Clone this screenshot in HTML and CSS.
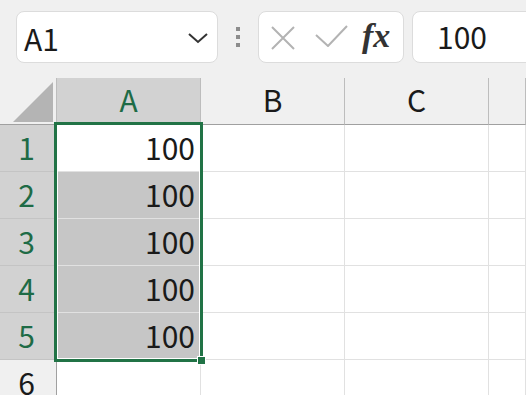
FILE: index.html
```html
<!DOCTYPE html>
<html lang="ja">

<head>
    <meta charset="UTF-8">
    <meta name="viewport" content="width=device-width, initial-scale=1.0">
    <title>Sheet1</title>
    <link rel="stylesheet" href="styles.css">
</head>

<body>
    <!-- Name box + formula bar -->
    <div class="toolbar">
        <div class="name-box">
            <span class="name-text">A1</span>
            <svg class="chevron" width="22" height="14" viewBox="0 0 22 14">
                <polyline points="2,3 11,11 20,3" fill="none" stroke="#333" stroke-width="2" />
            </svg>
        </div>
        <div class="grip">
            <span></span><span></span><span></span>
        </div>
        <div class="fx-box">
            <svg class="icon-x" width="26" height="24" viewBox="0 0 26 24">
                <path d="M2 1 L24 23 M24 1 L2 23" stroke="#b3b3b3" stroke-width="2" fill="none" />
            </svg>
            <svg class="icon-check" width="33" height="23" viewBox="0 0 33 23">
                <polyline points="1,11 13,22 32,2" fill="none" stroke="#b3b3b3" stroke-width="2" />
            </svg>
            <span class="fx">fx</span>
        </div>
        <div class="formula">100</div>
    </div>

    <!-- Grid -->
    <div class="sheet">
        <div class="corner"></div>
        <div class="col-head sel">A</div>
        <div class="col-head">B</div>
        <div class="col-head">C</div>
        <div class="col-head"></div>

        <div class="row-head sel">1</div>
        <div class="cell num">100</div>
        <div class="cell"></div>
        <div class="cell"></div>
        <div class="cell"></div>

        <div class="row-head sel">2</div>
        <div class="cell num hl">100</div>
        <div class="cell"></div>
        <div class="cell"></div>
        <div class="cell"></div>

        <div class="row-head sel">3</div>
        <div class="cell num hl">100</div>
        <div class="cell"></div>
        <div class="cell"></div>
        <div class="cell"></div>

        <div class="row-head sel">4</div>
        <div class="cell num hl">100</div>
        <div class="cell"></div>
        <div class="cell"></div>
        <div class="cell"></div>

        <div class="row-head sel">5</div>
        <div class="cell num hl">100</div>
        <div class="cell"></div>
        <div class="cell"></div>
        <div class="cell"></div>

        <div class="row-head">6</div>
        <div class="cell"></div>
        <div class="cell"></div>
        <div class="cell"></div>
        <div class="cell"></div>

        <!-- selection outline over A1:A5 -->
        <div class="selection">
            <div class="handle"></div>
        </div>
    </div>
</body>

</html>
```

FILE: styles.css
```css
body {
    margin: 0;
    overflow: hidden;
    height: 100vh;
    background: #f0f0f0;
    font-family: "Noto Sans CJK JP", "Noto Sans", sans-serif;
    color: #1a1a1a;
}

.toolbar {
    display: flex;
    align-items: center;
    height: 52px;
    padding: 11px 0 15px 16px;
}

.name-box {
    width: 202px;
    height: 52px;
    box-sizing: border-box;
    background: #fff;
    border: 1px solid #dcdcdc;
    border-radius: 8px;
    display: flex;
    align-items: center;
    justify-content: space-between;
    padding: 0 8px 0 7px;
}

.name-text {
    font-size: 30px;
    line-height: 1;
    margin-top: 1px;
}

.chevron {
    margin-top: 1px;
}

.grip {
    width: 40px;
    display: flex;
    flex-direction: column;
    align-items: center;
    gap: 4px;
}

.grip span {
    width: 4px;
    height: 4px;
    background: #8c8c8c;
}

.fx-box {
    width: 146px;
    height: 52px;
    box-sizing: border-box;
    background: #fff;
    border: 1px solid #dcdcdc;
    border-radius: 8px;
    display: flex;
    align-items: center;
    padding-left: 11px;
}

.icon-x {
    margin-top: 2px;
}

.icon-check {
    margin-left: 19px;
    margin-top: -4px;
}

.fx {
    font-family: "Liberation Serif", serif;
    font-style: italic;
    font-weight: bold;
    font-size: 34px;
    color: #333;
    margin-left: 14px;
    margin-top: -2px;
}

.formula {
    flex: 1;
    height: 52px;
    box-sizing: border-box;
    margin-left: 8px;
    margin-right: -10px;
    background: #fff;
    border: 1px solid #dcdcdc;
    border-radius: 8px;
    font-size: 30px;
    line-height: 48px;
    padding-left: 24px;
}

.sheet {
    position: relative;
    display: grid;
    grid-template-columns: 57px 144px 144px 144px 1fr;
    grid-auto-rows: 47px;
    font-size: 30px;
    line-height: 1;
}

.sheet > div {
    box-sizing: border-box;
}

.corner {
    position: relative;
    border-right: 1px solid #bdbdbd;
    border-bottom: 1px solid #a0a0a0;
}

.corner::after {
    content: "";
    position: absolute;
    right: 3px;
    bottom: 2px;
    width: 40px;
    height: 40px;
    background: #b4b4b4;
    clip-path: polygon(100% 0, 100% 100%, 0 100%);
}

.col-head {
    display: flex;
    align-items: center;
    justify-content: center;
    padding-bottom: 4px;
    border-right: 1px solid #bdbdbd;
    border-bottom: 1px solid #a0a0a0;
}

.row-head {
    display: flex;
    align-items: center;
    justify-content: center;
    padding-right: 3px;
    padding-bottom: 3px;
    border-right: 1px solid #a0a0a0;
    border-bottom: 1px solid #c4c4c4;
}

.col-head.sel,
.row-head.sel {
    background: #d2d2d2;
    color: #1e6b46;
}

.cell {
    background: #fff;
    border-right: 1px solid #e1e1e1;
    border-bottom: 1px solid #e1e1e1;
}

.cell.num {
    display: flex;
    align-items: center;
    justify-content: flex-end;
    padding-right: 5px;
    padding-bottom: 3px;
}

.cell.hl {
    background: #c6c6c6;
}

.selection {
    position: absolute;
    left: 54px;
    top: 44px;
    width: 149px;
    height: 240px;
    box-sizing: border-box;
    border: 3px solid #217346;
    box-shadow: inset 0 0 0 1px #fff;
}

.handle {
    position: absolute;
    right: -6px;
    bottom: -6px;
    width: 7px;
    height: 7px;
    background: #217346;
    border: 1px solid #fff;
}
```
